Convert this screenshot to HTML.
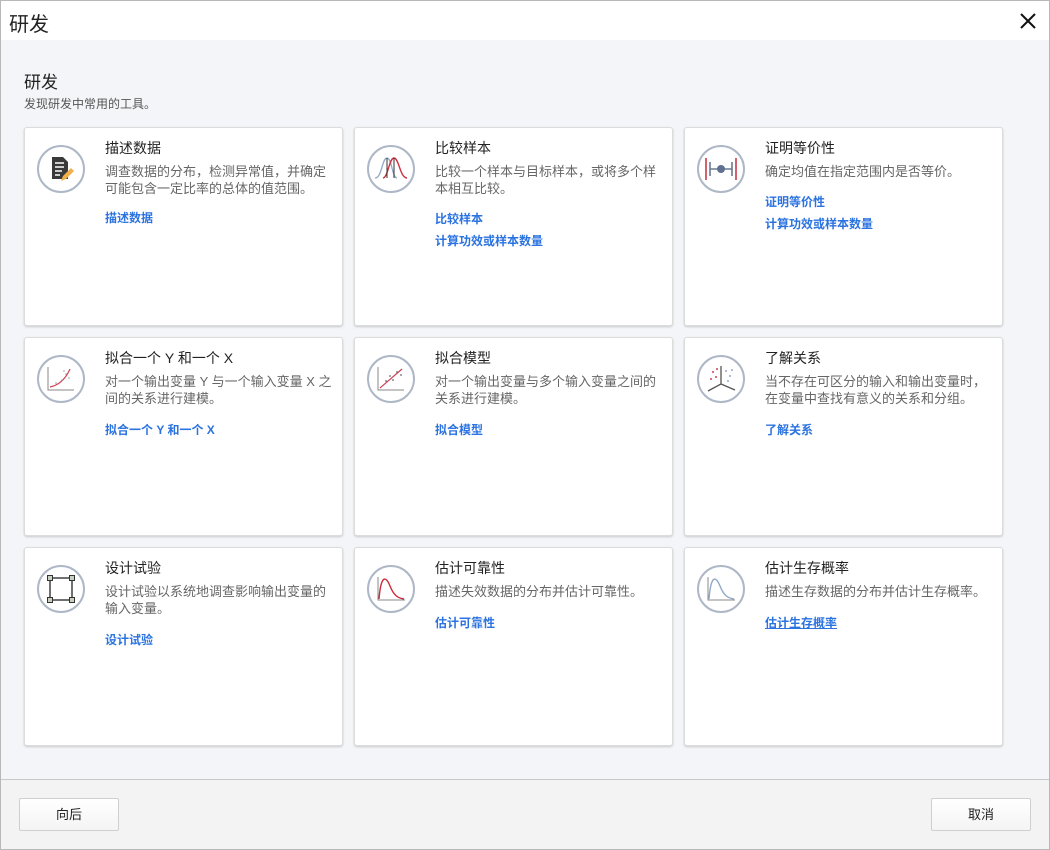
<!DOCTYPE html>
<html><head><meta charset="utf-8"><style>
*{box-sizing:border-box;margin:0;padding:0}
body{width:1050px;height:850px;font-family:"Liberation Sans","Noto Sans CJK SC",sans-serif;background:#fff;position:relative;overflow:hidden}
.bd{position:absolute;left:0;top:0;width:1050px;height:850px;border:1px solid #b8b8b8;z-index:5}
.tb{position:absolute;left:0;top:0;width:1050px;height:40px;background:#fff}
.tb .t{position:absolute;left:9px;top:8px;font-size:20px;color:#222}
.tb .x{position:absolute;left:1018px;top:11px}
.body{position:absolute;left:0;top:40px;width:1050px;height:739px;background:#f4f5f8}
.h1{position:absolute;left:24px;top:68px;font-size:17px;color:#222}
.h2{position:absolute;left:24px;top:95px;font-size:12px;color:#555}
.card{position:absolute;width:319px;height:199px;background:#fff;border:1px solid #dcdcdc;border-radius:3px;box-shadow:0 1px 2px rgba(0,0,0,.18)}
.card svg.ic{position:absolute;left:11px;top:16px}
.card .tt{position:absolute;left:80px;top:10px;font-size:14px;color:#222}
.card .d{position:absolute;left:80px;top:35px;width:228px;font-size:13px;line-height:17px;color:#666}
.card .l{position:absolute;left:80px;font-size:12px;font-weight:bold;color:#2b73e0}
.foot{position:absolute;left:0;top:779px;width:1050px;height:71px;background:#f3f3f3;border-top:1px solid #c8c8c8}
.btn{position:absolute;top:18px;width:100px;height:33px;border:1px solid #cfcfcf;border-radius:2px;background:linear-gradient(#fff,#f4f4f4);font-size:13px;text-align:center;line-height:31px;color:#222}
</style></head><body>
<div class="tb"><div class="t">研发</div>
<svg class="x" width="20" height="20" viewBox="0 0 20 20"><path d="M3 3L17 17M17 3L3 17" stroke="#111" stroke-width="2"/></svg></div>
<div class="body"></div>
<div class="h1">研发</div>
<div class="h2">发现研发中常用的工具。</div>

<div class="card" style="left:24px;top:127px">
<svg class="ic" width="50" height="50" viewBox="0 0 50 50"><circle cx="25" cy="25" r="23" fill="#fff" stroke="#adb7c6" stroke-width="2"/><path d="M16 13h11l5 5v17H16z" fill="#3a3a3a"/><path d="M19 19h9M19 23h9M19 27h7M19 31h5" stroke="#fff" stroke-width="1.6"/><path d="M25 37l2-5 8-8 3 3-8 8z" fill="#f2b04a"/></svg>
<div class="tt">描述数据</div><div class="d">调查数据的分布，检测异常值，并确定可能包含一定比率的总体的值范围。</div>
<div class="l" style="top:81px">描述数据</div></div>

<div class="card" style="left:354px;top:127px">
<svg class="ic" width="50" height="50" viewBox="0 0 50 50"><circle cx="25" cy="25" r="23" fill="#fff" stroke="#adb7c6" stroke-width="2"/><path d="M9 34C16 34 16 14 21 14S26 34 31 34" fill="none" stroke="#8fa8c8" stroke-width="1.3"/><path d="M17 34C22 34 23 14 28 14S34 34 41 34" fill="none" stroke="#cc3344" stroke-width="1.4"/><path d="M21 14v20M28 14v20" stroke="#333" stroke-width="1"/></svg>
<div class="tt">比较样本</div><div class="d">比较一个样本与目标样本，或将多个样本相互比较。</div>
<div class="l" style="top:82px">比较样本</div><div class="l" style="top:104px">计算功效或样本数量</div></div>

<div class="card" style="left:684px;top:127px">
<svg class="ic" width="50" height="50" viewBox="0 0 50 50"><circle cx="25" cy="25" r="23" fill="#fff" stroke="#adb7c6" stroke-width="2"/><path d="M10 14v22M40 14v22" stroke="#d0505c" stroke-width="1.8"/><path d="M14 18v14M36 18v14M14 25h22" stroke="#6c7b90" stroke-width="1.6"/><circle cx="25" cy="25" r="4" fill="#5e7190"/></svg>
<div class="tt">证明等价性</div><div class="d">确定均值在指定范围内是否等价。</div>
<div class="l" style="top:65px">证明等价性</div><div class="l" style="top:87px">计算功效或样本数量</div></div>

<div class="card" style="left:24px;top:337px">
<svg class="ic" width="50" height="50" viewBox="0 0 50 50"><circle cx="25" cy="25" r="23" fill="#fff" stroke="#adb7c6" stroke-width="2"/><path d="M12 13v23h26" fill="none" stroke="#888" stroke-width="1"/><path d="M14 33C24 31 30 24 34 15" fill="none" stroke="#d04050" stroke-width="1.2"/><g fill="#99a"><circle cx="20" cy="29" r=".8"/><circle cx="26" cy="26" r=".8"/><circle cx="30" cy="20" r=".8"/><circle cx="33" cy="24" r=".8"/><circle cx="28" cy="17" r=".8"/></g></svg>
<div class="tt">拟合一个 Y 和一个 X</div><div class="d">对一个输出变量 Y 与一个输入变量 X 之间的关系进行建模。</div>
<div class="l" style="top:83px">拟合一个 Y 和一个 X</div></div>

<div class="card" style="left:354px;top:337px">
<svg class="ic" width="50" height="50" viewBox="0 0 50 50"><circle cx="25" cy="25" r="23" fill="#fff" stroke="#adb7c6" stroke-width="2"/><path d="M12 13v23h26" fill="none" stroke="#888" stroke-width="1"/><path d="M14 34L36 15" stroke="#d04050" stroke-width="1.2"/><g fill="#667"><circle cx="20" cy="27" r=".9"/><circle cx="27" cy="26" r=".9"/><circle cx="31" cy="18" r=".9"/><circle cx="35" cy="21" r=".9"/><circle cx="24" cy="22" r=".9"/></g></svg>
<div class="tt">拟合模型</div><div class="d">对一个输出变量与多个输入变量之间的关系进行建模。</div>
<div class="l" style="top:83px">拟合模型</div></div>

<div class="card" style="left:684px;top:337px">
<svg class="ic" width="50" height="50" viewBox="0 0 50 50"><circle cx="25" cy="25" r="23" fill="#fff" stroke="#adb7c6" stroke-width="2"/><path d="M25 12v18L12 37M25 30l14 6" fill="none" stroke="#555" stroke-width="1.3"/><g fill="#d04050"><circle cx="17" cy="18" r="1"/><circle cx="20" cy="23" r="1"/><circle cx="15" cy="25" r="1"/><circle cx="21" cy="15" r="1"/></g><g fill="#8fa8c8"><circle cx="30" cy="17" r="1"/><circle cx="34" cy="22" r="1"/><circle cx="32" cy="27" r="1"/><circle cx="36" cy="16" r="1"/></g></svg>
<div class="tt">了解关系</div><div class="d">当不存在可区分的输入和输出变量时，在变量中查找有意义的关系和分组。</div>
<div class="l" style="top:83px">了解关系</div></div>

<div class="card" style="left:24px;top:547px">
<svg class="ic" width="50" height="50" viewBox="0 0 50 50"><circle cx="25" cy="25" r="23" fill="#fff" stroke="#adb7c6" stroke-width="2"/><rect x="14" y="14" width="22" height="22" fill="none" stroke="#333" stroke-width="1.4"/><g fill="#c8d0c0" stroke="#333" stroke-width="1"><rect x="11.5" y="11.5" width="5" height="5"/><rect x="33.5" y="11.5" width="5" height="5"/><rect x="11.5" y="33.5" width="5" height="5"/><rect x="33.5" y="33.5" width="5" height="5"/></g></svg>
<div class="tt">设计试验</div><div class="d">设计试验以系统地调查影响输出变量的输入变量。</div>
<div class="l" style="top:83px">设计试验</div></div>

<div class="card" style="left:354px;top:547px">
<svg class="ic" width="50" height="50" viewBox="0 0 50 50"><circle cx="25" cy="25" r="23" fill="#fff" stroke="#adb7c6" stroke-width="2"/><path d="M12 13v23h27" fill="none" stroke="#888" stroke-width="1"/><path d="M13 35C15 10 20 12 24 22S32 34 38 35" fill="none" stroke="#cc2a3a" stroke-width="1.4"/></svg>
<div class="tt">估计可靠性</div><div class="d">描述失效数据的分布并估计可靠性。</div>
<div class="l" style="top:66px">估计可靠性</div></div>

<div class="card" style="left:684px;top:547px">
<svg class="ic" width="50" height="50" viewBox="0 0 50 50"><circle cx="25" cy="25" r="23" fill="#fff" stroke="#adb7c6" stroke-width="2"/><path d="M12 13v23h27" fill="none" stroke="#888" stroke-width="1"/><path d="M13 35C15 10 20 12 24 22S32 34 38 35" fill="none" stroke="#8fa8c8" stroke-width="1.4"/></svg>
<div class="tt">估计生存概率</div><div class="d">描述生存数据的分布并估计生存概率。</div>
<div class="l" style="top:66px;text-decoration:underline">估计生存概率</div></div>

<div class="foot">
<div class="btn" style="left:19px">向后</div>
<div class="btn" style="left:931px">取消</div>
</div>
<div class="bd"></div>
</body></html>
